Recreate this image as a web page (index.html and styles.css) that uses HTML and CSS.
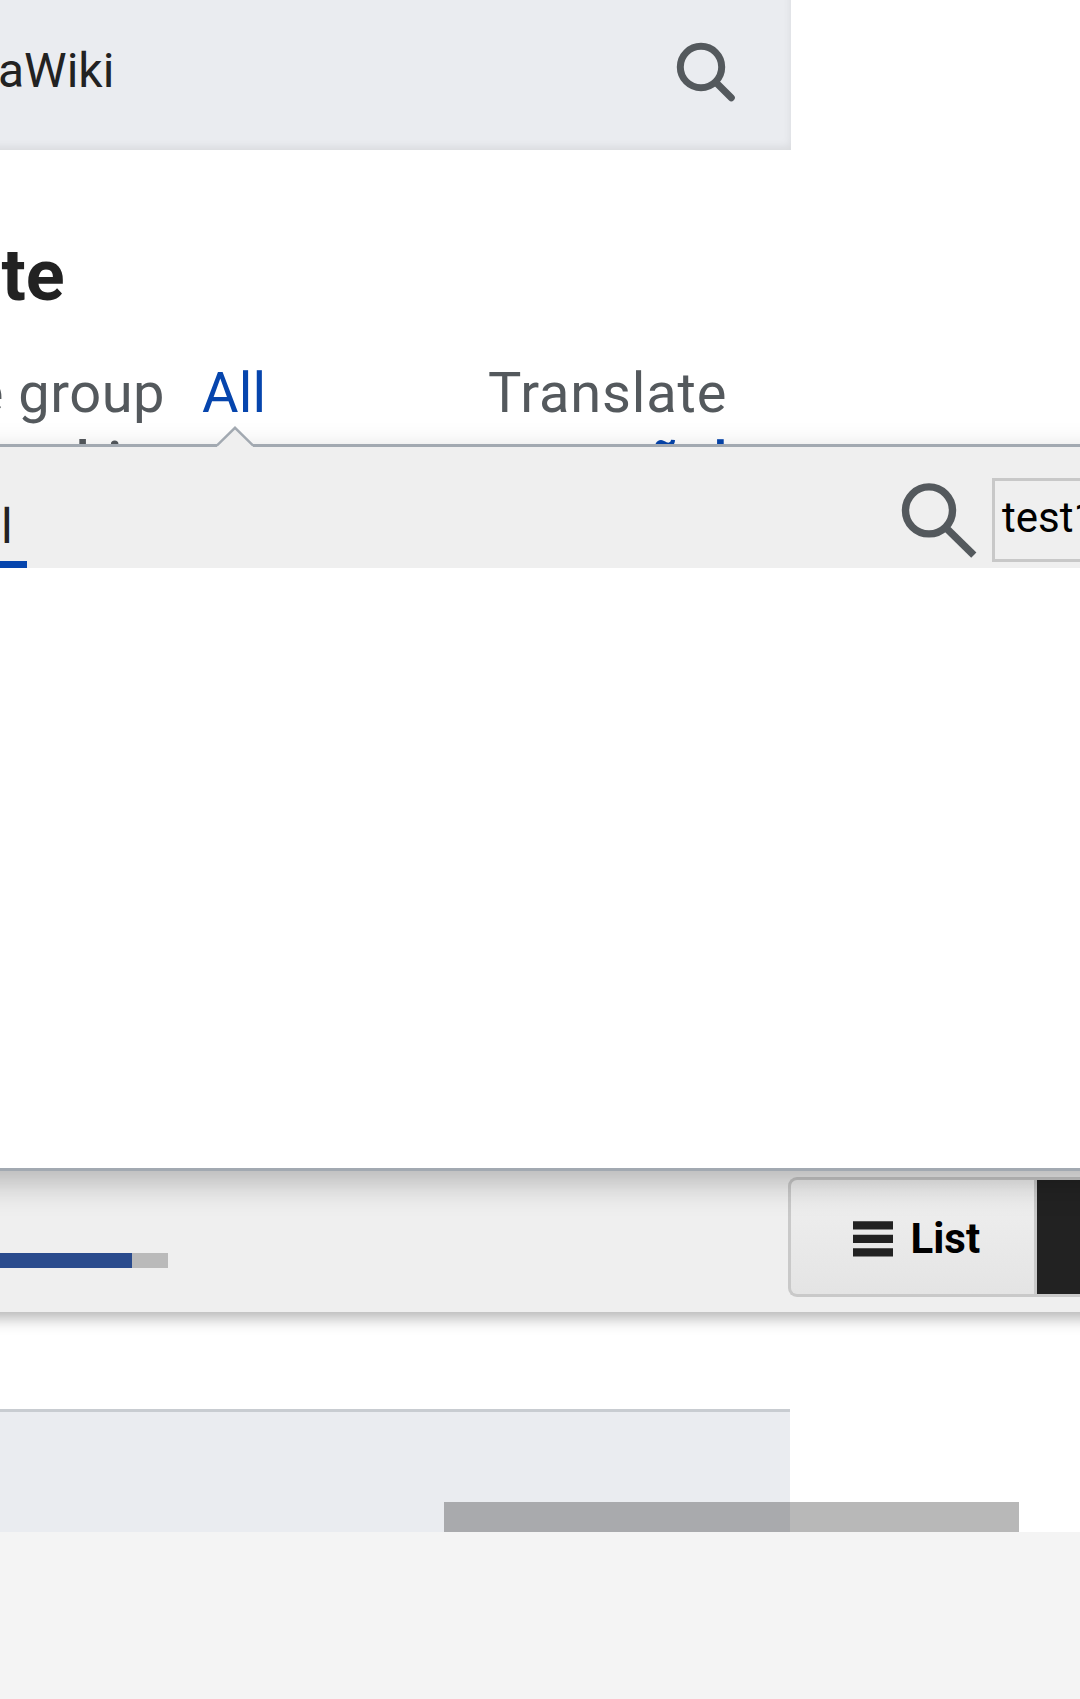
FILE: index.html
```html
<!DOCTYPE html>
<html lang="en">
<head>
<meta charset="utf-8">
<title>Translate</title>
<link rel="stylesheet" href="styles.css">
</head>
<body>
<header class="site-header">
  <span class="site-name">aWiki</span>
  <svg class="header-search" viewBox="0 0 60 60"><circle cx="25" cy="25" r="20.7"/><path d="M40 40.5 55.3 55.8" stroke-linecap="round"/></svg>
</header>
<main>
  <h1>te</h1>
  <section class="selectors">
    <div class="group-label">e group<span class="second-line group-second">hi</span></div>
    <a class="group-all">All</a>
    <div class="translate-to">Translate<span class="second-line language"><span class="to">to</span><a>español</a></span></div>
  </section>
  <section class="popup">
    <svg class="caret" viewBox="0 0 38 22"><path class="caret-fill" d="M1 22V19.5L19 2 37 19.5V22Z"/><path class="caret-line" d="M.8 19.6 19 1.8 37.2 19.6"/></svg>
    <div class="popup-head">
      <a class="tab">l</a>
      <div class="group-search">
        <svg class="popup-search" viewBox="0 0 80 80"><circle cx="29" cy="30.4" r="23.5"/><path d="M45 46.8 73.8 75.2"/></svg>
        <div class="search-input">test1</div>
      </div>
    </div>
  </section>
  <section class="toolbar">
    <div class="progress"><div class="progress-done"></div></div>
    <div class="view-buttons">
      <button class="view-list">
        <svg class="menu-icon" viewBox="0 0 40 36"><path d="M0 .2H40V8.6H0ZM0 13.7H40V22.1H0ZM0 27.2H40V35.6H0Z"/></svg>
        <span>List</span>
      </button>
      <button class="view-page"></button>
    </div>
  </section>
</main>
<footer class="site-footer"><div class="scrollbar"></div></footer>
</body>
</html>
```
FILE: styles.css
```css
* { box-sizing: border-box; }
body {
  margin: 0;
  height: 1699px;
  overflow: hidden;
  background: #f4f4f4;
  color: #222;
  font-family: Roboto, "Liberation Sans", sans-serif;
}
svg { display: block; fill: none; }
.site-header {
  display: flex;
  align-items: center;
  justify-content: space-between;
  width: 1080px;
  height: 150px;
  padding: 0 344px 16px 0;
  background: linear-gradient(#fff, #fff) right / 289.5px 100% no-repeat #eaecf0;
  position: relative;
}
.site-header::after {
  content: "";
  position: absolute;
  inset: -20px 289.5px 0 -20px;
  box-shadow: inset 0 -3px 9px rgba(0, 0, 0, .08);
}
.site-name {
  font-size: 48px;
  line-height: 56px;
  padding-top: 7px;
  margin-left: -2px;
}
.header-search {
  width: 60px;
  height: 60px;
  margin-top: 10px;
  stroke: #54595d;
  stroke-width: 7;
}
main {
  height: 1259px;
  background: #fff;
  overflow: hidden;
}
h1 {
  margin: 0;
  height: 209px;
  padding: 84px 0 0 1.5px;
  font-size: 72px;
  line-height: 84px;
  font-weight: 700;
}
.selectors {
  display: flex;
  height: 85px;
  overflow: hidden;
  color: #54595d;
  font-size: 56px;
  line-height: 69px;
  letter-spacing: .5px;
  white-space: nowrap;
}
.group-label {
  width: 165px;
  display: flex;
  flex-direction: column;
  align-items: flex-end;
}
.second-line { display: block; }
.group-second { width: 89px; font-weight: 500; }
.group-all {
  color: #0645ad;
  width: 286px;
  padding-left: 37px;
  letter-spacing: .2px;
}
.translate-to { padding-left: 37px; letter-spacing: .85px; }
.language { display: flex; gap: 13px; margin-left: -25px; letter-spacing: .5px; }
.language a { color: #0645ad; font-weight: 500; }
.popup {
  position: relative;
  z-index: 2;
  height: 727px;
  border: solid #a2a9b1;
  border-width: 3px 0;
  background: linear-gradient(#efefef, #efefef) top / 100% 121px no-repeat #fff;
}
/* wider than the panel, so the shadow stays even up to the sides */
.popup::before {
  content: "";
  position: absolute;
  z-index: -1;
  inset: -3px -60px;
  border: solid #a2a9b1;
  border-width: 3px 0;
  background: linear-gradient(#efefef, #efefef) top / 100% 121px no-repeat #fff;
  box-shadow: 0 12px 30px rgba(0, 0, 0, .24);
}
.caret {
  position: absolute;
  left: 215.5px;
  top: -21px;
  width: 38px;
  height: 22px;
}
.caret-fill { fill: #efefef; }
.caret-line { stroke: #a2a9b1; stroke-width: 2.4; }
.popup-head {
  display: flex;
  justify-content: space-between;
  height: 121px;
}
.tab {
  width: 27px;
  padding: 52px 0 0 1px;
  border-bottom: 7px solid #0645ad;
  font-size: 48px;
  line-height: 56px;
}
.group-search { display: flex; width: 180px; overflow: hidden; }
.popup-search {
  flex: none;
  width: 80px;
  height: 80px;
  margin: 33px 12px 0 0;
  stroke: #54595d;
  stroke-width: 7.4;
}
.search-input {
  flex: none;
  width: 88px;
  height: 84px;
  margin-top: 30.5px;
  padding: 12px 0 0 7px;
  border: solid #c8c8c8;
  border-width: 3px 0 3px 3px;
  overflow: hidden;
  color: #000;
  font-size: 42px;
  line-height: 50px;
}
.toolbar {
  display: flex;
  justify-content: space-between;
  height: 141px;
  position: relative;
  z-index: 1;
}
.toolbar::before {
  content: "";
  position: absolute;
  z-index: -1;
  inset: 0 -60px;
  background: #efefef;
  box-shadow: 0 6px 15px rgba(0, 0, 0, .3);
}
.progress {
  width: 168px;
  height: 15px;
  margin-top: 81.5px;
  background: #bababa;
}
.progress-done { width: 132px; height: 15px; background: #2a4b8d; }
.view-buttons {
  display: flex;
  width: 292.5px;
  height: 120px;
  margin-top: 6px;
  border: solid #c9c9c9;
  border-width: 3px 0 3px 3px;
  border-radius: 9px 0 0 9px;
  background: linear-gradient(#f0f0f0, #e4e4e4);
}
button {
  margin: 0;
  border: 0;
  background: none;
  color: #000;
  font: 700 42px/50px Roboto, "Liberation Sans", sans-serif;
}
.view-list {
  display: flex;
  align-items: center;
  gap: 17.5px;
  width: 246.5px;
  padding: 3px 0 0 62.5px;
  border-right: 3px solid #c9c9c9;
}
.menu-icon { width: 40px; height: 36px; fill: #222; }
.view-page { flex: 1; background: #222; }
.site-footer {
  position: relative;
  height: 123px;
  border-top: 3px solid #c8ccd1;
  border-image: linear-gradient(90deg, #c8ccd1 790.5px, #fff 790.5px) 3 0 0;
  background: linear-gradient(90deg, #eaecf0 790.5px, #fff 790.5px);
}
.scrollbar {
  position: absolute;
  left: 444px;
  bottom: 0;
  width: 575px;
  height: 30.5px;
  background: rgba(0, 0, 0, .28);
}
```
